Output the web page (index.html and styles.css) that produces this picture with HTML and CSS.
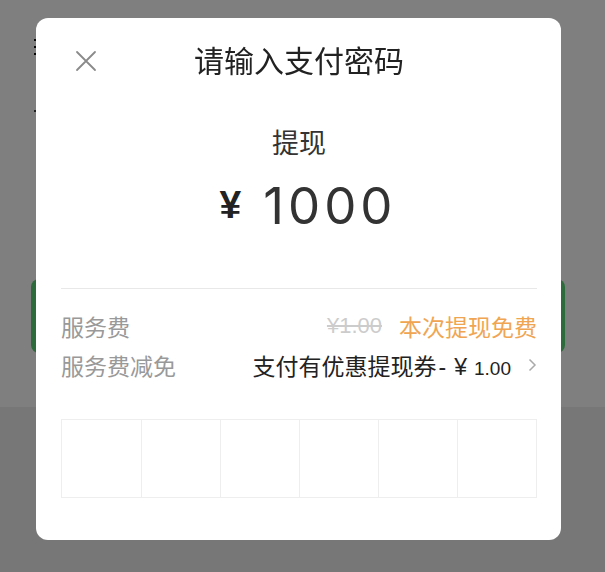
FILE: index.html
```html
<!DOCTYPE html>
<html lang="zh-CN">
<head>
    <meta charset="UTF-8">
    <meta name="viewport" content="width=device-width, initial-scale=1.0">
    <title>请输入支付密码</title>
    <link rel="stylesheet" href="styles.css">
</head>
<body>
    <!-- página de fundo, coberta pela máscara -->
    <div class="page">
        <div class="page-top">
            <div class="dots"><i></i><i></i><i></i></div>
            <div class="mark"></div>
            <div class="green-btn"></div>
        </div>
        <div class="page-bottom"></div>
    </div>

    <div class="mask"></div>

    <div class="dialog">
        <div class="dialog-header">
            <svg class="close-icon" width="22" height="22" viewBox="0 0 22 22">
                <path d="M2 2 L20 20 M20 2 L2 20" stroke="#8a8a8a" stroke-width="1.8" fill="none" stroke-linecap="round"/>
            </svg>
            <span class="dialog-title">请输入支付密码</span>
        </div>

        <div class="tipo">提现</div>
        <div class="valor"><span class="moeda">¥</span><span class="numero">1000</span></div>

        <div class="divisor"></div>

        <div class="linha">
            <span class="rotulo">服务费</span>
            <span class="direita"><s class="riscado">¥1.00</s><span class="gratis">本次提现免费</span></span>
        </div>
        <div class="linha">
            <span class="rotulo">服务费减免</span>
            <span class="direita">
                <span class="cupom">支付有优惠提现券<span class="traco">-</span><span class="yen">¥</span><span class="pequeno">1.00</span></span>
                <svg class="seta" width="9" height="14" viewBox="0 0 9 14">
                    <path d="M1.5 1.5 L7 7 L1.5 12.5" stroke="#aaa" stroke-width="1.5" fill="none"/>
                </svg>
            </span>
        </div>

        <div class="senha">
            <div class="casa"></div>
            <div class="casa"></div>
            <div class="casa"></div>
            <div class="casa"></div>
            <div class="casa"></div>
            <div class="casa"></div>
        </div>
    </div>
</body>
</html>
```

FILE: styles.css
```css
body {
    margin: 0;
    width: 605px;
    height: 572px;
    overflow: hidden;
    font-family: "Liberation Sans", "Noto Sans CJK SC", sans-serif;
    background: #fff;
}

.page {
    display: flex;
    flex-direction: column;
    height: 572px;
}

.page-top {
    height: 407px;
    background: #fff;
    padding-top: 39px;
    box-sizing: border-box;
}

.dots {
    display: flex;
    flex-direction: column;
    gap: 5px;
    margin-left: 34px;
    width: 2px;
}

.dots i {
    display: block;
    width: 2px;
    height: 2px;
    background: #111;
}

.mark {
    margin: 55px 0 0 34px;
    width: 2px;
    height: 2px;
    background: #444;
}

.green-btn {
    margin: 167px 0 0 31px;
    width: 534px;
    height: 74px;
    border-radius: 8px;
    background: #5ad678;
}

.page-bottom {
    flex: 1;
    background: #eee;
}

.mask {
    position: fixed;
    inset: 0;
    background: rgba(0, 0, 0, 0.5);
}

.dialog {
    position: absolute;
    top: 18px;
    left: 36px;
    width: 525px;
    height: 522px;
    box-sizing: border-box;
    padding: 0 24px 0 25px;
    background: #fff;
    border-radius: 12px;
}

.dialog-header {
    position: relative;
    padding-top: 21px;
    height: 62px;
    box-sizing: border-box;
    text-align: center;
}

.close-icon {
    position: absolute;
    left: 14px;
    top: 32px;
}

.dialog-title {
    font-size: 30px;
    line-height: 40px;
    color: #222;
    font-family: "Noto Sans CJK SC", sans-serif;
}

.tipo {
    margin-top: 46px;
    font-size: 27px;
    line-height: 32px;
    color: #333;
    text-align: center;
    font-family: "Noto Sans CJK SC", sans-serif;
}

.valor {
    margin-top: 17px;
    height: 60px;
    display: flex;
    align-items: center;
    justify-content: center;
    padding-left: 18px;
    color: #333;
}

.moeda {
    font-size: 39px;
    font-weight: bold;
    margin-right: 22px;
    color: #222;
}

.numero {
    font-family: Inter, "Liberation Sans", sans-serif;
    font-size: 51px;
    letter-spacing: 4px;
}

.divisor {
    margin-top: 53px;
    height: 1px;
    background: #e8e8e8;
}

.linha {
    display: flex;
    justify-content: space-between;
    align-items: center;
    height: 39px;
    font-family: "Noto Sans CJK SC", sans-serif;
    font-size: 23px;
}

.divisor + .linha {
    margin-top: 17px;
}

.rotulo {
    color: #999;
}

.direita {
    display: flex;
    align-items: center;
}

.riscado {
    color: #ccc;
    font-family: "Liberation Sans", sans-serif;
    font-size: 22px;
    margin-right: 17px;
}

.gratis {
    color: #f0a552;
}

.cupom {
    color: #222;
}

.traco {
    margin-left: 2px;
    font-family: "Liberation Sans", sans-serif;
}

.yen {
    margin-left: 8px;
    margin-right: 7px;
    font-family: "Liberation Sans", sans-serif;
}

.pequeno {
    font-family: "Liberation Sans", sans-serif;
    font-size: 19px;
}

.seta {
    margin-left: 17px;
}

.senha {
    margin-top: 35px;
    display: grid;
    grid-template-columns: repeat(6, 1fr);
    height: 79px;
    border: 1px solid #eee;
    box-sizing: border-box;
}

.casa {
    border-left: 1px solid #eee;
}

.casa:first-child {
    border-left: none;
}
```
